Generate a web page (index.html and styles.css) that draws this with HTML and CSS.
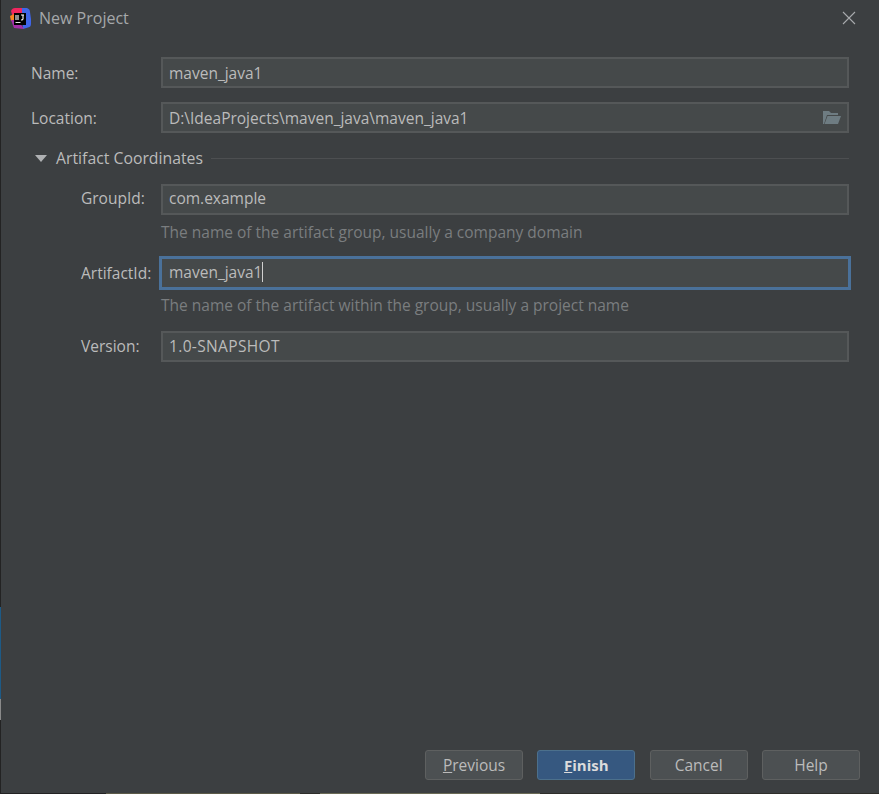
FILE: index.html
```html
<!DOCTYPE html>
<html lang="en">
<head>
<meta charset="utf-8">
<title>New Project</title>
<link rel="stylesheet" href="styles.css">
</head>
<body>
<div class="dialog">
  <header class="titlebar">
    <svg class="logo" width="21" height="21" viewBox="0 0 21 21">
      <path d="M1 3 Q2 0 5 0 L13 0 L14 5 L3 10 Z" fill="#f0265f"/>
      <path d="M12 0 L17 0 Q20 1 20 4 L21 11 L21 16 Q21 19 18 19.5 L13 21 L12 10 Z" fill="#3f66e8"/>
      <path d="M0 8 L4 6 L4 13 L1 13 Z" fill="#f7841f"/>
      <path d="M1 12 L4 20 L14 21 L8 12 Z" fill="#a32ea8"/>
      <rect x="4" y="5" width="12" height="12" fill="#000"/>
      <rect x="5.5" y="14" width="5" height="1" fill="#e8e8e8"/>
      <path d="M6 7 V12 M8 7 V12 M13 7 V11 Q13 12 11 12 M11 7 H14" stroke="#fff" stroke-width="1.1" fill="none"/>
    </svg>
    <span class="title">New Project</span>
    <svg class="close" width="14" height="14" viewBox="0 0 14 14"><path d="M1 1 L13 13 M13 1 L1 13" stroke="#a9abad" stroke-width="1.1" fill="none"/></svg>
  </header>

  <main class="form">
    <div class="row row-top">
      <label class="label">Name:</label>
      <div class="field">maven_java1</div>
    </div>
    <div class="row row-top">
      <label class="label">Location:</label>
      <div class="field field-browse">
        <span>D:\IdeaProjects\maven_java\maven_java1</span>
        <svg class="folder" width="19" height="15" viewBox="0 0 19 15">
          <path d="M1 14 V1 H7 L9 3 H16 V5 H5 L2 14 Z" fill="#6e7c82"/>
          <path d="M5.5 6 H19 L16 14 H2.5 Z" fill="#6e7c82"/>
        </svg>
      </div>
    </div>

    <div class="section">
      <svg class="caret" width="12" height="7" viewBox="0 0 12 7"><path d="M0 0 H12 L6 7 Z" fill="#afb1b3"/></svg>
      <span class="section-name">Artifact Coordinates</span>
      <span class="section-line"></span>
    </div>

    <div class="coords">
      <div class="row row-raised">
        <label class="label">GroupId:</label>
        <div class="field">com.example</div>
      </div>
      <p class="hint">The name of the artifact group, usually a company domain</p>
      <div class="row row-focus">
        <label class="label">ArtifactId:</label>
        <div class="field field-focus">maven_java1<span class="cursor"></span></div>
      </div>
      <p class="hint">The name of the artifact within the group, usually a project name</p>
      <div class="row">
        <label class="label">Version:</label>
        <div class="field field-caps">1.0-SNAPSHOT</div>
      </div>
    </div>
  </main>

  <footer class="buttons">
    <button class="btn"><u>P</u>revious</button>
    <button class="btn btn-primary"><u>F</u>inish</button>
    <button class="btn">Cancel</button>
    <button class="btn">Help</button>
  </footer>
</div>
</body>
</html>
```
FILE: styles.css
```css
* { box-sizing: border-box; }
html, body { margin: 0; height: 100%; background: #232323; }
body {
  width: 879px;
  height: 794px;
  overflow: hidden;
  font-family: "Open Sans", "Noto Sans", sans-serif;
  font-size: 15.5px;
  color: #bbbbbb;
  background:
    linear-gradient(#232323 0 607px, #1d5a86 607px 699px, #8a8a8a 699px 720px, #232323 720px) left top / 1px 100% no-repeat,
    linear-gradient(90deg, #232323 0 106px, #5c5a48 106px 300px, #2e2e2a 300px 320px, #6a6a55 320px 540px, #2e2e2a 540px) left bottom / 100% 1px no-repeat,
    #232323;
}
.dialog {
  margin-left: 1px;
  width: 878px;
  height: 793px;
  background: #3c3f41;
  display: flex;
  flex-direction: column;
}
.titlebar {
  height: 36px;
  display: flex;
  align-items: center;
  padding: 0 23px 0 9px;
  flex: none;
}
.logo { flex: none; }
.title { margin-left: 8px; color: #a5a8aa; font-size: 16px; }
.close { margin-left: auto; }
.form {
  flex: 1;
  padding: 21px 30px 0 30px;
  display: flex;
  flex-direction: column;
}
.row { display: flex; align-items: center; margin-bottom: 14px; height: 31px; }
.label { width: 130px; flex: none; padding-bottom: 2px; }
.row-top .label { padding-bottom: 0; }
.field {
  flex: 1;
  height: 31px;
  background: #45494a;
  border: 2px solid #555859;
  padding: 0 6px 2px;
  display: flex;
  align-items: center;
  color: #bbbbbb;
  white-space: pre;
}
.row-top .field { padding-bottom: 0; }
.row-raised .field { padding-bottom: 3px; }
.row-raised .label { padding-bottom: 3px; }
.field-caps { letter-spacing: 0.35px; }
.field-browse { justify-content: space-between; padding-right: 6px; }
.folder { flex: none; }
.field-focus {
  height: 34px;
  margin: -2px -2px -1px;
  border: 3px solid #4a719a;
  padding: 0 7px 2px;
}
.cursor { width: 1px; height: 20px; background: #d0d0d0; }
.section { display: flex; align-items: center; height: 20px; margin: 2px 0 15px 4px; padding-bottom: 1px; }
.caret { flex: none; }
.section-name { margin-left: 9px; padding-bottom: 1px; font-size: 15.8px; }
.section-line { flex: 1; height: 1px; background: #4d4f51; margin-left: 8px; }
.coords { padding-left: 50px; display: flex; flex-direction: column; }
.coords .label { width: 80px; }
.coords .row { margin-bottom: 7px; }
.coords .row-focus { margin-bottom: 6px; }
.hint {
  margin: 0 0 16px 80px;
  line-height: 20px;
  color: #7a7d7f;
}
.buttons {
  flex: none;
  display: flex;
  justify-content: flex-end;
  gap: 14.33px;
  padding: 0 19px 13px 0;
}
.btn {
  width: 98px;
  height: 30px;
  background: #4c5052;
  border: 1px solid #5e6060;
  border-radius: 3px;
  font: inherit;
  color: #bbbbbb;
  padding: 0;
}
.btn-primary {
  background: #365880;
  border-color: #4c708c;
  color: #dcdcdc;
  font-weight: 700;
  font-size: 15px;
}
```
